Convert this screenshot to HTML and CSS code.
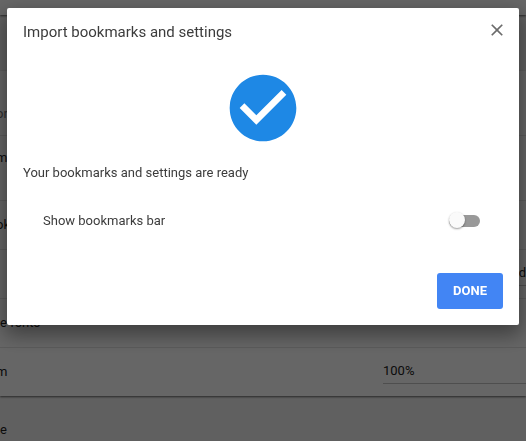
FILE: index.html
```html
<!DOCTYPE html>
<html lang="en">
<head>
<meta charset="utf-8">
<title>Settings</title>
<link rel="stylesheet" href="styles.css">
</head>
<body>
<main class="page">
  <section class="card card-top"></section>
  <section class="card">
    <div class="row row-tall row-low"><span class="label label-cut muted">or</span></div>
    <div class="row row-tall row-high"><span class="label label-cut">me</span></div>
    <div class="row"><span class="label label-cut">ok</span></div>
    <div class="row"><span class="value value-end">d</span></div>
    <div class="row"><span class="label">e fonts</span></div>
    <div class="row"><span class="label label-cut">m</span><span class="value">100%</span></div>
  </section>
  <h2 class="section-title">e</h2>
</main>
<div class="overlay">
  <div class="dialog" role="dialog" aria-labelledby="dialog-title">
    <header class="dialog-header">
      <h1 class="dialog-title" id="dialog-title">Import bookmarks and settings</h1>
      <button class="close" type="button" aria-label="Close">
        <svg viewBox="0 0 24 24" width="20" height="20"><path d="M19 6.41L17.59 5 12 10.59 6.41 5 5 6.41 10.59 12 5 17.59 6.41 19 12 13.41 17.59 19 19 17.59 13.41 12z"/></svg>
      </button>
    </header>
    <svg class="success" viewBox="0 0 24 24" width="80" height="80" aria-hidden="true"><path d="M12 2C6.48 2 2 6.48 2 12s4.48 10 10 10 10-4.48 10-10S17.52 2 12 2zm-2 15l-5-5 1.41-1.41L10 14.17l7.59-7.59L19 8l-9 9z"/></svg>
    <p class="message">Your bookmarks and settings are ready</p>
    <div class="option">
      <label for="show-bar">Show bookmarks bar</label>
      <input class="toggle" id="show-bar" type="checkbox" role="switch">
    </div>
    <footer class="actions"><button class="done" type="button">DONE</button></footer>
  </div>
</div>
</body>
</html>
```
FILE: styles.css
```css
* {
  box-sizing: border-box;
}

body {
  margin: 0;
  background: #f1f1f1;
  color: #212121;
  font: 13px/20px Roboto, "Liberation Sans", sans-serif;
}

.page {
  min-height: 100vh;
  overflow: hidden;
}

.card {
  background: #fff;
  box-shadow: 0 1px 2px rgba(0, 0, 0, .6);
}

.card-top {
  height: 15px;
  margin-bottom: 56px;
}

.row {
  display: flex;
  align-items: center;
  justify-content: space-between;
  height: 49px;
  border-bottom: 1px solid #e4e4e4;
}

.row:last-child {
  height: 48px;
  border-bottom: 0;
}

.row-tall {
  height: 65px;
}

.row-low {
  align-items: flex-end;
  padding-bottom: 11px;
}

.row-high {
  align-items: flex-start;
  padding-top: 12px;
}

.label-cut {
  margin-left: -4px;
}

.muted {
  color: #757575;
}

.value {
  width: 143px;
  margin-left: auto;
  padding-bottom: 2px;
  border-bottom: 1px solid #c4c4c4;
}

.value-end {
  text-align: right;
}

.section-title {
  margin: 24px 0 0;
  font-size: 13px;
  line-height: 20px;
  font-weight: 400;
}

.overlay {
  position: fixed;
  inset: 0;
  padding: 8px 7px;
  background: rgba(0, 0, 0, .6);
}

.dialog {
  display: flex;
  flex-direction: column;
  max-width: 512px;
  margin: 0 auto;
  padding: 12px 16px 16px;
  border-radius: 2px;
  background: #fff;
  box-shadow: 0 8px 20px 2px rgba(0, 0, 0, .4);
  color: #3c3c3c;
}

.dialog-header {
  display: flex;
  justify-content: space-between;
  height: 24px;
}

.dialog-title {
  margin: 0;
  font-size: 15px;
  line-height: 24px;
  font-weight: 400;
}

.close {
  width: 20px;
  height: 20px;
  margin-right: -4px;
  padding: 0;
  border: 0;
  background: none;
}

.close svg {
  display: block;
  fill: #6b6b6b;
}

.success {
  align-self: center;
  margin-top: 24px;
  fill: #1e88e5;
}

.message {
  margin: 15px 0 0;
}

.option {
  display: flex;
  align-items: center;
  justify-content: space-between;
  margin: 28px 23px 0 20px;
}

.toggle {
  position: relative;
  width: 31px;
  height: 12px;
  margin: 0;
  border-radius: 6px;
  background: #999;
  appearance: none;
}

.toggle::before {
  content: "";
  position: absolute;
  top: -3px;
  left: 0;
  width: 16px;
  height: 16px;
  border-radius: 50%;
  background: #fafafa;
  box-shadow: 0 1px 2px rgba(0, 0, 0, .4);
}

.toggle:checked::before {
  left: 15px;
}

.actions {
  display: flex;
  justify-content: flex-end;
  margin-top: 42px;
}

.done {
  min-width: 66px;
  height: 36px;
  padding: 0 8px;
  border: 0;
  border-radius: 3px;
  background: #4285f4;
  color: #fff;
  font: 700 13px/20px Roboto, "Liberation Sans", sans-serif;
}
```
